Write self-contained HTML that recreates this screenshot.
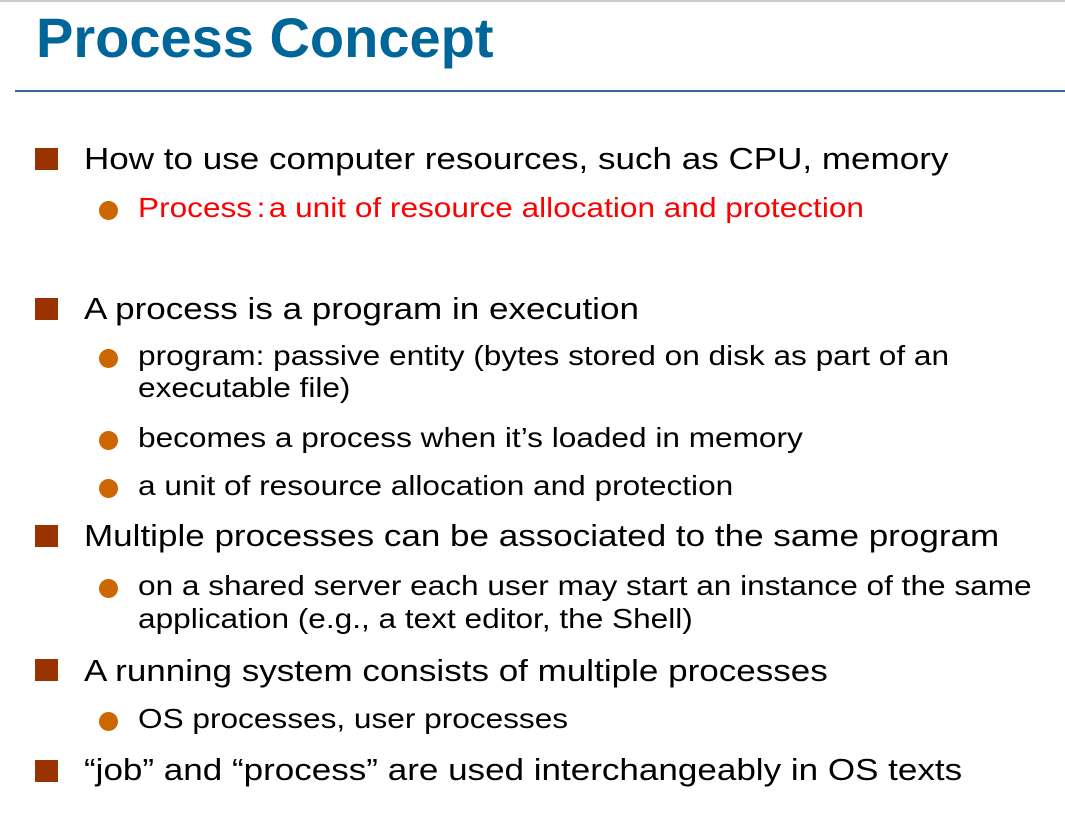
<!DOCTYPE html>
<html><head><meta charset="utf-8"><style>
body{margin:0;width:1065px;height:813px;background:#fff;position:relative;overflow:hidden;font-family:"Liberation Sans","Noto Sans CJK SC",sans-serif;}
.t{position:absolute;white-space:nowrap;line-height:1;transform-origin:0 0;}
.m{font-size:31px;color:#000;left:84px;transform:scaleX(1.13);}
.s{font-size:28px;color:#000;left:138px;transform:scaleX(1.128);}
.sq{position:absolute;left:35px;width:23px;height:22px;background:#993300;}
.ci{position:absolute;left:99px;width:19px;height:19px;border-radius:50%;background:#cc6600;}
</style></head><body>
<div style="position:absolute;left:0;top:0;width:1065px;height:2px;background:#ccc"></div>
<div class="t" style="left:36px;top:10px;font-size:56px;font-weight:bold;color:#006699">Process Concept</div>
<div style="position:absolute;left:15px;top:90px;width:1050px;height:2px;background:#336699"></div>

<div class="sq" style="top:148px"></div><div class="t m" style="top:143px">How to use computer resources, such as CPU, memory</div>
<div class="ci" style="top:201px"></div><div class="t s" style="top:194px;color:#ff0000">Process<span style="margin:0 3px 0 4px">:</span>a unit of resource allocation and protection</div>

<div class="sq" style="top:298px"></div><div class="t m" style="top:293px">A process is a program in execution</div>
<div class="ci" style="top:349px"></div><div class="t s" style="top:342px">program: passive entity (bytes stored on disk as part of an</div>
<div class="t s" style="top:374px">executable file)</div>
<div class="ci" style="top:431px"></div><div class="t s" style="top:424px">becomes a process when it’s loaded in memory</div>
<div class="ci" style="top:479px"></div><div class="t s" style="top:472px">a unit of resource allocation and protection</div>

<div class="sq" style="top:525px"></div><div class="t m" style="top:520px">Multiple processes can be associated to the same program</div>
<div class="ci" style="top:579px"></div><div class="t s" style="top:572px">on a shared server each user may start an instance of the same</div>
<div class="t s" style="top:605px">application (e.g., a text editor, the Shell)</div>

<div class="sq" style="top:659px"></div><div class="t m" style="top:655px">A running system consists of multiple processes</div>
<div class="ci" style="top:712px"></div><div class="t s" style="top:705px">OS processes, user processes</div>

<div class="sq" style="top:760px"></div><div class="t m" style="top:754px">“job” and “process” are used interchangeably in OS texts</div>
</body></html>
